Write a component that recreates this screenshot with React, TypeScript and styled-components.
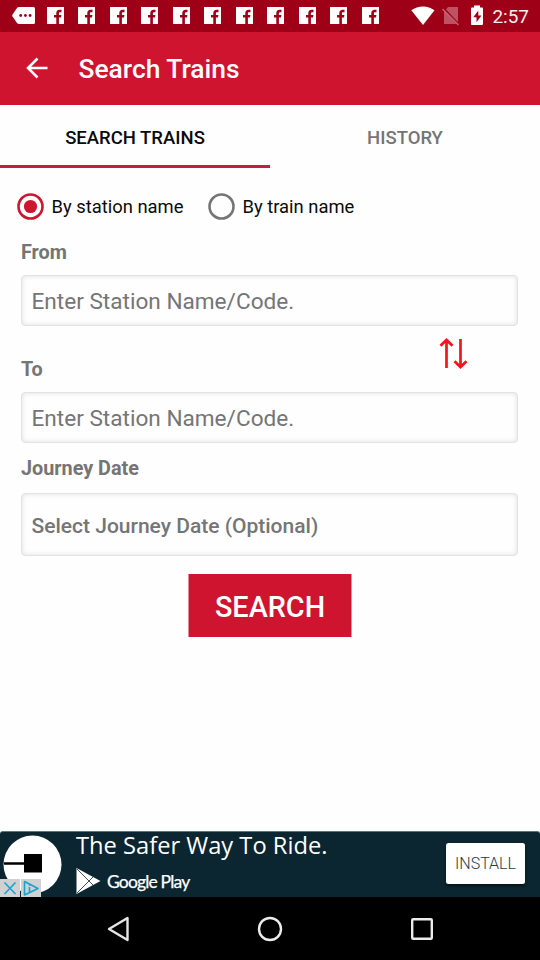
import React from "react";
import styled, { createGlobalStyle } from "styled-components";

const Global = createGlobalStyle`
  *, *::before, *::after { box-sizing: border-box; }
  body { margin: 0; background: #fff; }
  svg { display: block; flex: none; }
  button, input { font-family: inherit; margin: 0; }
`;

const Screen = styled.div`
  width: 540px;
  height: 960px;
  overflow: hidden;
  display: flex;
  flex-direction: column;
  background: #fefefe;
  font-family: Roboto, "Liberation Sans", sans-serif;
`;

const StatusBar = styled.header`
  height: 31.5px;
  flex: none;
  background: #9e0018;
  color: #fff;
  display: flex;
  align-items: center;
  padding-left: 12px;
`;

const Notifications = styled.div`
  display: flex;
  gap: 14.5px;
  margin-left: 11.5px;
`;

const SystemIcons = styled.div`
  display: flex;
  align-items: center;
  margin-left: 32px;
`;

const Clock = styled.span`
  margin-left: 1px;
  padding-top: 2px;
  font-size: 18.9px;
  line-height: 24px;
  color: #ffeef0;
`;

const AppBar = styled.div`
  height: 73.5px;
  flex: none;
  background: #cf142f;
  color: #fff;
  display: flex;
  align-items: center;
  padding-left: 26px;
  gap: 30.5px;
`;

const Title = styled.h1`
  margin: 0;
  padding-top: 2px;
  font-size: 26.4px;
  font-weight: 500;
  line-height: 32px;
`;

const Tabs = styled.nav`
  height: 63px;
  flex: none;
  display: flex;
`;

const Tab = styled.button<{ $active?: boolean }>`
  flex: 1;
  border: 0;
  border-bottom: 3px solid ${(p) => (p.$active ? "#c41e3a" : "transparent")};
  background: none;
  padding: 5px 0 0;
  font-size: 18.5px;
  font-weight: 500;
  color: ${(p) => (p.$active ? "#0a0a0a" : "#757575")};
`;

const Form = styled.main`
  flex: 1;
  display: flex;
  flex-direction: column;
  padding: 0 22px 0 21px;
`;

const RadioRow = styled.div`
  display: flex;
  gap: 24.5px;
  height: 76px;
  align-items: center;
  margin: 0 0 -3px -4px;
`;

const RadioOption = styled.label`
  display: flex;
  align-items: center;
  gap: 7.5px;
  font-size: 18.4px;
  line-height: 24px;
  color: #0a0a0a;
`;

const RadioText = styled.span`
  padding-top: 2px;
`;

const FieldLabel = styled.div<{ $spaced?: boolean }>`
  height: 22px;
  margin-top: ${(p) => (p.$spaced ? "14px" : "0")};
  font-size: 19.8px;
  line-height: 24px;
  font-weight: 700;
  color: #757575;
`;

const SwapRow = styled.div`
  display: flex;
  justify-content: space-between;
  align-items: flex-end;
  height: 54px;
  padding-right: 50px;
`;

const SwapButton = styled.button`
  align-self: flex-start;
  margin-top: 12px;
  border: 0;
  padding: 0;
  background: none;
`;

const Field = styled.div<{ $tall?: boolean }>`
  height: ${(p) => (p.$tall ? "63px" : "51px")};
  margin-top: ${(p) => (p.$tall ? "14px" : "12px")};
  flex: none;
  display: flex;
  align-items: center;
  padding: 2px 9.5px 0;
  border: 1px solid #e2e2e2;
  border-radius: 4px;
  box-shadow: inset 0 0 5px rgba(0, 0, 0, 0.13);
  font-size: ${(p) => (p.$tall ? "21px" : "22.6px")};
  font-weight: ${(p) => (p.$tall ? 500 : 400)};
  color: #757575;
`;

const SearchButton = styled.button`
  width: 163px;
  height: 63px;
  margin: 17.5px auto 0;
  padding: 3px 0 0;
  border: 0;
  background: #cf142f;
  color: #fff;
  font-size: 28.8px;
  font-weight: 500;
  transform: translateX(0.5px);
`;

const Ad = styled.aside`
  height: 66px;
  flex: none;
  position: relative;
  display: flex;
  background: #0b2630;
  border-top: 1px solid #60747b;
  border-radius: 3px 3px 0 0;
  color: #fff;
`;

const Logo = styled.div`
  padding: 3px 0 0 3px;
  width: 76px;
`;

const AdCopy = styled.div`
  flex: 1;
  display: flex;
  flex-direction: column;
`;

const Headline = styled.div`
  height: 34px;
  line-height: 26px;
  font-family: "Open Sans", "Noto Sans", sans-serif;
  font-size: 23.7px;
  white-space: nowrap;
`;

const Store = styled.div`
  display: flex;
  align-items: center;
  gap: 6px;
  height: 32px;
`;

const StoreName = styled.span`
  padding-top: 2px;
  font-family: Lato, "Open Sans", sans-serif;
  font-size: 17.5px;
  line-height: 22px;
  letter-spacing: -0.83px;
  -webkit-text-stroke: 0.25px #fff;
  white-space: nowrap;
`;

const Install = styled.button`
  width: 79px;
  height: 41px;
  margin: 11px 15px 0 0;
  padding: 0;
  border: 0;
  border-radius: 2.5px;
  background: #fff;
  box-shadow: 0 2px 3px rgba(0, 0, 0, 0.5);
  color: #263c47;
  font-size: 16px;
  font-weight: 300;
`;

const AdChoices = styled.div`
  position: absolute;
  left: 0;
  bottom: 0;
  display: flex;
  gap: 1px;
`;

const NavBar = styled.footer`
  height: 63px;
  flex: none;
  display: flex;
  justify-content: center;
  align-items: center;
  gap: 126px;
  background: #000;
`;

const FacebookIcon = () => (
  <svg width="17" height="17" viewBox="0 0 17 17">
    <path fill="#fff" d="M0 0h17v17H0z" />
    <path fill="#9e0018" d="M9.300 17v-6.500H7V8h2.300V6.300c0-2.300 1.200-3.500 3.300-3.500h1.900v2.400h-1.200c-1 0-1.400.5-1.400 1.400V8h2.500l-.4 2.500h-2.100V17z" />
  </svg>
);

const Radio = ({ checked }: { checked?: boolean }) => (
  <svg width="27" height="27" viewBox="0 0 27 27">
    <circle cx="13.5" cy="13.5" r="12" fill="none" strokeWidth="2.6" stroke={checked ? "#cf142f" : "#757575"} />
    {checked && <circle cx="13.5" cy="13.5" r="6.6" fill="#cf142f" />}
  </svg>
);

const notifications = Array.from({ length: 11 }, (_, i) => i);

export default function App() {
  return (
    <Screen>
      <Global />
      <StatusBar>
        <svg width="23" height="17" viewBox="0 0 23 17">
          <path d="M7 0h14.5Q23 0 23 1.5v14Q23 17 21.500 17H7Q5.800 17 5 16L.4 9.200Q0 8.500.4 7.800L5 1Q5.800 0 7 0z" fill="#fff" />
          <g fill="#9e0018">
            <circle cx="8.700" cy="8.500" r="1.400" />
            <circle cx="13.400" cy="8.500" r="1.400" />
            <circle cx="18.100" cy="8.500" r="1.400" />
          </g>
        </svg>
        <Notifications>
          {notifications.map((n) => (
            <FacebookIcon key={n} />
          ))}
        </Notifications>
        <SystemIcons>
          <svg width="81" height="21" viewBox="0 0 81 21">
            <path d="M.3 5.300C7 .1 17 .1 23.500 5.300L12 20z" fill="#fff" />
            <path d="M37 2H47v17H33V7z" fill="#fff" opacity=".32" />
            <path d="M32 3l16 17" stroke="#9e0018" strokeWidth="2.500" />
            <path d="M31.500 4l16 16" stroke="#d8808c" strokeWidth="1.400" opacity=".75" />
            <path d="M63 .5h6v2h2q1 0 1 1V19q0 1-1 1H61q-1 0-1-1V3.500q0-1 1-1h2z" fill="#fff" />
            <path d="M67.300 5.500l-5 6.800h3.200v5l5-6.900h-3.200z" fill="#9e0018" />
          </svg>
        </SystemIcons>
        <Clock>2:57</Clock>
      </StatusBar>
      <AppBar>
        <svg width="22" height="22" viewBox="0 0 22 22" fill="none" stroke="#fff" strokeWidth="2.500">
          <path d="M21.500 11H2.500M11.500 1.500L2 11l9.500 9.500" />
        </svg>
        <Title>Search Trains</Title>
      </AppBar>
      <Tabs>
        <Tab $active>SEARCH TRAINS</Tab>
        <Tab>HISTORY</Tab>
      </Tabs>
      <Form>
        <RadioRow>
          <RadioOption>
            <Radio checked />
            <RadioText>By station name</RadioText>
          </RadioOption>
          <RadioOption>
            <Radio />
            <RadioText>By train name</RadioText>
          </RadioOption>
        </RadioRow>
        <FieldLabel>From</FieldLabel>
        <Field>Enter Station Name/Code.</Field>
        <SwapRow>
          <FieldLabel>To</FieldLabel>
          <SwapButton aria-label="Swap stations">
            <svg width="29" height="31" viewBox="0 0 29 31" fill="none" stroke="#f5141e" strokeWidth="2.700">
              <path d="M7.500 30V3M1.500 7.800L7.500 2l6 5.800M21.500 1v27M15.500 23.200l6 5.800 6-5.800" />
            </svg>
          </SwapButton>
        </SwapRow>
        <Field>Enter Station Name/Code.</Field>
        <FieldLabel $spaced>Journey Date</FieldLabel>
        <Field $tall>Select Journey Date (Optional)</Field>
        <SearchButton>SEARCH</SearchButton>
      </Form>
      <Ad>
        <Logo>
          <svg width="60" height="60" viewBox="0 0 60 60">
            <circle cx="29.500" cy="29.500" r="29" fill="#fff" />
            <path d="M1 27.300h20v-8.300h18v18.500H21v-7.700H1z" fill="#000" />
          </svg>
        </Logo>
        <AdCopy>
          <Headline>The Safer Way To Ride.</Headline>
          <Store>
            <svg width="25" height="26" viewBox="0 0 25 26">
              <path d="M.5 0L24.500 13 .5 26z" fill="#fff" />
              <path d="M1 1l17 17M1 25L18 8" stroke="#0b2630" strokeWidth=".8" />
            </svg>
            <StoreName>Google Play</StoreName>
          </Store>
        </AdCopy>
        <Install>INSTALL</Install>
        <AdChoices>
          <svg width="20" height="18" viewBox="0 0 20 18">
            <path d="M0 0h20v18H0z" fill="#cfd1d2" />
            <path d="M4.500 3.500l11 11.500M15.500 3.500L4.500 15" stroke="#16a5cd" strokeWidth="1.600" />
          </svg>
          <svg width="20" height="18" viewBox="0 0 20 18">
            <path d="M0 0h20v18H0z" fill="#cfd1d2" />
            <path d="M3.500 2.500L17 9.500l-13.500 6.500zM8.500 8v5M8.500 5.500v1.300" fill="none" stroke="#16a5cd" strokeWidth="1.600" strokeLinejoin="round" />
          </svg>
        </AdChoices>
      </Ad>
      <NavBar>
        <svg width="26" height="26" viewBox="0 0 26 26" fill="none" stroke="#e6e6e6" strokeWidth="2.400" strokeLinejoin="round">
          <path d="M22.500 2v22L4 13z" />
        </svg>
        <svg width="26" height="26" viewBox="0 0 26 26" fill="none" stroke="#ececec" strokeWidth="2.400">
          <circle cx="13" cy="13" r="11" />
        </svg>
        <svg width="26" height="26" viewBox="0 0 26 26" fill="none" stroke="#ececec" strokeWidth="2.400">
          <rect x="3.200" y="3.200" width="19.600" height="19.600" rx="1" />
        </svg>
      </NavBar>
    </Screen>
  );
}
